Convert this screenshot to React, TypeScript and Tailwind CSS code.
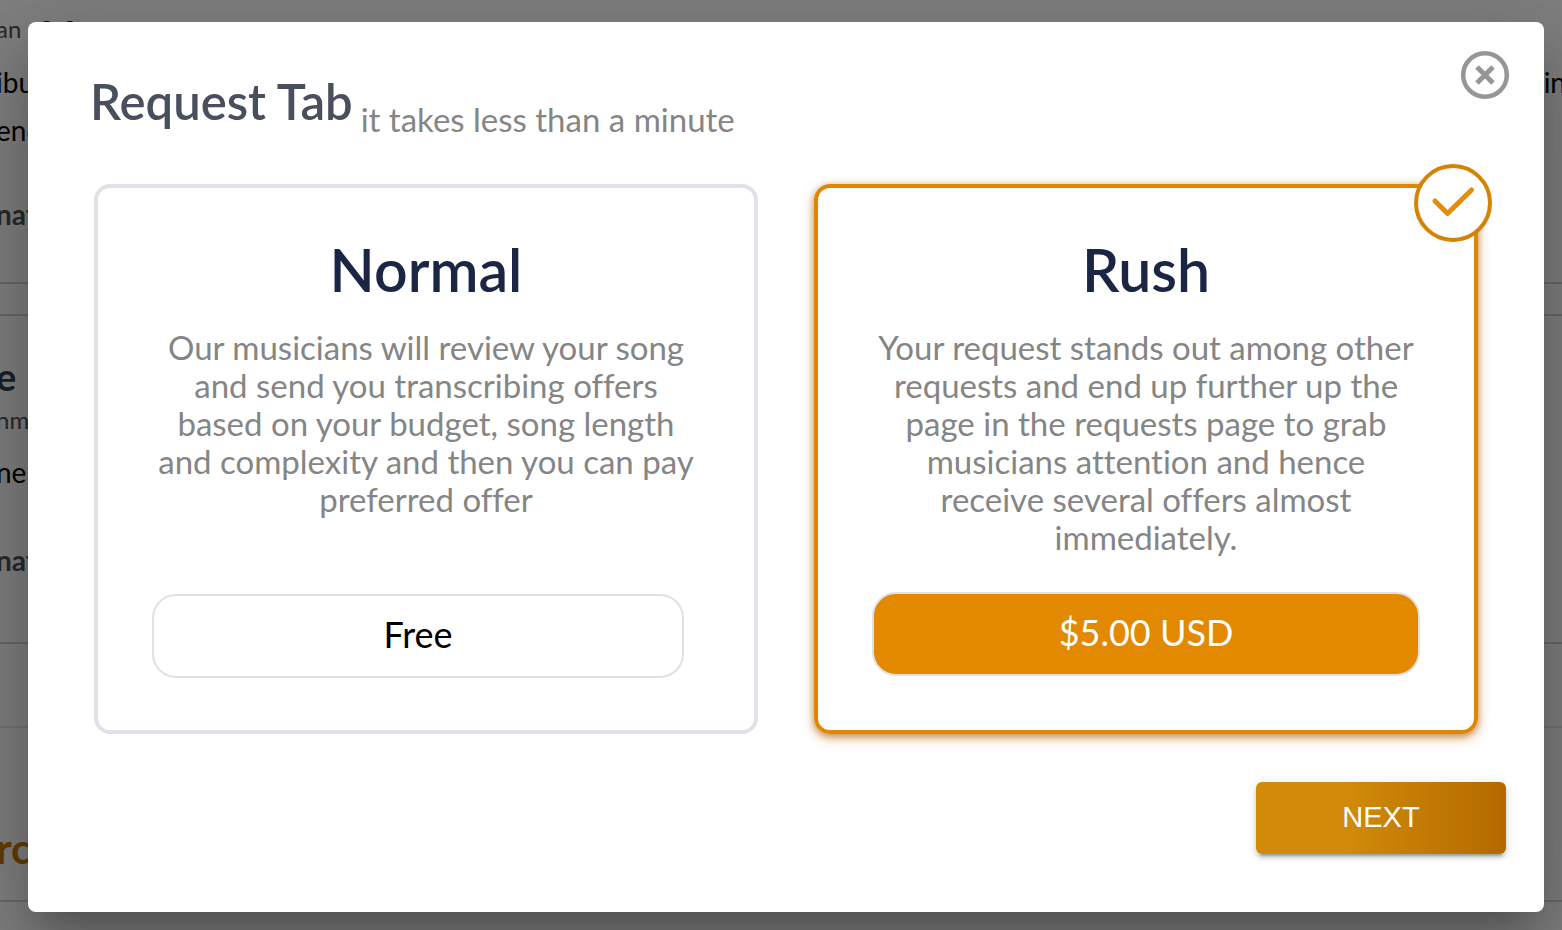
import { useState } from "react";

interface Plan {
    id: string;
    title: string;
    bio: string;
    price: string;
}

const plans: Plan[] = [
    {
        id: "normal",
        title: "Normal",
        bio: "Our musicians will review your song\nand send you transcribing offers\nbased on your budget, song length\nand complexity and then you can pay\npreferred offer",
        price: "Free",
    },
    {
        id: "rush",
        title: "Rush",
        bio: "Your request stands out among other\nrequests and end up further up the\npage in the requests page to grab\nmusicians attention and hence\nreceive several offers almost\nimmediately.",
        price: "$5.00 USD",
    },
];

function RequestList() {
    return (
        <div className="-mx-1 flex min-h-screen flex-col bg-white text-[28px] leading-12 text-black">
            {/* First request */}
            <div className="h-[284px] border-b-2 border-gray-300">
                <div className="flex h-[58px] items-center gap-5">
                    <span className="text-[24px] text-neutral-600">an</span>
                    <span className="pt-2 text-[36px] font-bold text-neutral-800">M</span>
                </div>
                <div className="flex justify-between">
                    <p>ibu</p>
                    <p>in</p>
                </div>
                <p>enc</p>
                <p className="pt-9 font-bold text-neutral-600">nat</p>
            </div>

            {/* Second request */}
            <div className="mt-[30px] h-[330px] border-y-2 border-gray-300 pt-9">
                <h2 className="text-[38px] font-bold text-slate-700">e</h2>
                <p className="text-[24px] leading-10 text-neutral-600">nme</p>
                <p className="pt-2">ne</p>
                <p className="pt-10 font-bold text-neutral-600">nat</p>
            </div>

            <div className="h-[84px] border-b-2 border-gray-200"></div>

            <div className="h-[174px] border-b-2 border-gray-300 pt-24">
                <h2 className="text-[42px] font-bold text-[#c87800]">rc</h2>
            </div>
        </div>
    );
}

export default function App() {
    const [selected, setSelected] = useState("rush");
    const [open, setOpen] = useState(true);

    return (
        <div className="relative overflow-hidden font-[Lato,sans-serif] [font-variant-ligatures:none]">
            <RequestList />

            {open && (
                <div className="absolute inset-0 overflow-hidden bg-black/50 pt-[22px] pr-[18px] pb-[18px] pl-7">
                    <div
                        role="dialog"
                        aria-labelledby="request-title"
                        className="flex min-h-full flex-col rounded-lg bg-white pb-14 shadow-[0_22px_30px_-14px_rgba(0,0,0,0.2),0_48px_76px_6px_rgba(0,0,0,0.14),0_18px_92px_16px_rgba(0,0,0,0.12)]"
                    >
                        {/* Header */}
                        <div className="flex items-start justify-between pt-7 pr-[34px] pl-[62px]">
                            <div className="flex items-start gap-2">
                                <h1 id="request-title" className="pt-5 text-[49px] leading-[62px] font-semibold text-[#4a4f5e]">
                                    Request Tab
                                </h1>
                                <p className="pt-12 text-[33px] leading-[42px] text-[#858585]">it takes less than a minute</p>
                            </div>
                            <button aria-label="Close" onClick={() => setOpen(false)}>
                                <svg width="50" height="50" viewBox="0 0 50 50" fill="none" stroke="#979694">
                                    <circle cx="25" cy="25" r="21.8" strokeWidth="4.5" />
                                    <path d="M17 17L33 33M33 17L17 33" strokeWidth="5" />
                                </svg>
                            </button>
                        </div>

                        {/* Plans */}
                        <div className="grid grid-cols-2 gap-14 px-[66px] pt-11">
                            {plans.map((plan) => {
                                const active = plan.id === selected;
                                return (
                                    <div
                                        key={plan.id}
                                        className={`relative flex h-[550px] flex-col rounded-2xl border-4 pb-[52px] text-center ${
                                            active
                                                ? "border-[#e08600] px-[54px] shadow-[0_4px_12px_rgba(200,110,0,0.5),0_2px_6px_rgba(120,60,0,0.4)]"
                                                : "border-[#e1e1e8] pr-[70px] pl-[54px]"
                                        }`}
                                    >
                                        <div className={`flex flex-col items-center ${active ? "" : "-mr-4"}`}>
                                            <h2 className="pt-11 text-[59px] leading-[76px] font-semibold text-[#1b2544]">{plan.title}</h2>
                                            <p className="pt-5 text-[33px] leading-[38px] whitespace-pre text-[#858585]">{plan.bio}</p>
                                        </div>
                                        <button
                                            onClick={() => setSelected(plan.id)}
                                            className={`mt-auto h-[84px] rounded-3xl border-2 border-[#e1e1e4] pb-1 text-[36px] ${
                                                active ? "mb-[2px] bg-[#e28900] text-white" : "bg-white text-black"
                                            }`}
                                        >
                                            {plan.price}
                                        </button>
                                        {active && (
                                            <div className="absolute -top-6 -right-[18px] flex size-[78px] items-center justify-center rounded-full border-4 border-[#d58205] bg-white">
                                                <svg width="46" height="34" viewBox="0 0 46 34" fill="none" stroke="#e58c09" strokeWidth="5" strokeLinecap="round" strokeLinejoin="round">
                                                    <path d="M5 15L17.5 27.5L41.5 4" />
                                                </svg>
                                            </div>
                                        )}
                                    </div>
                                );
                            })}
                        </div>

                        {/* Next-button */}
                        <div className="flex justify-end pt-12 pr-[38px]">
                            <button className="h-18 w-[250px] rounded-md bg-linear-to-r from-[#d18b08] from-35% to-[#b36900] font-['Liberation_Sans',sans-serif] text-[29px] text-white shadow-[0_6px_2px_-4px_rgba(0,0,0,0.2),0_4px_4px_rgba(0,0,0,0.14),0_2px_10px_rgba(0,0,0,0.12)]">
                                NEXT
                            </button>
                        </div>
                    </div>
                </div>
            )}
        </div>
    );
}
